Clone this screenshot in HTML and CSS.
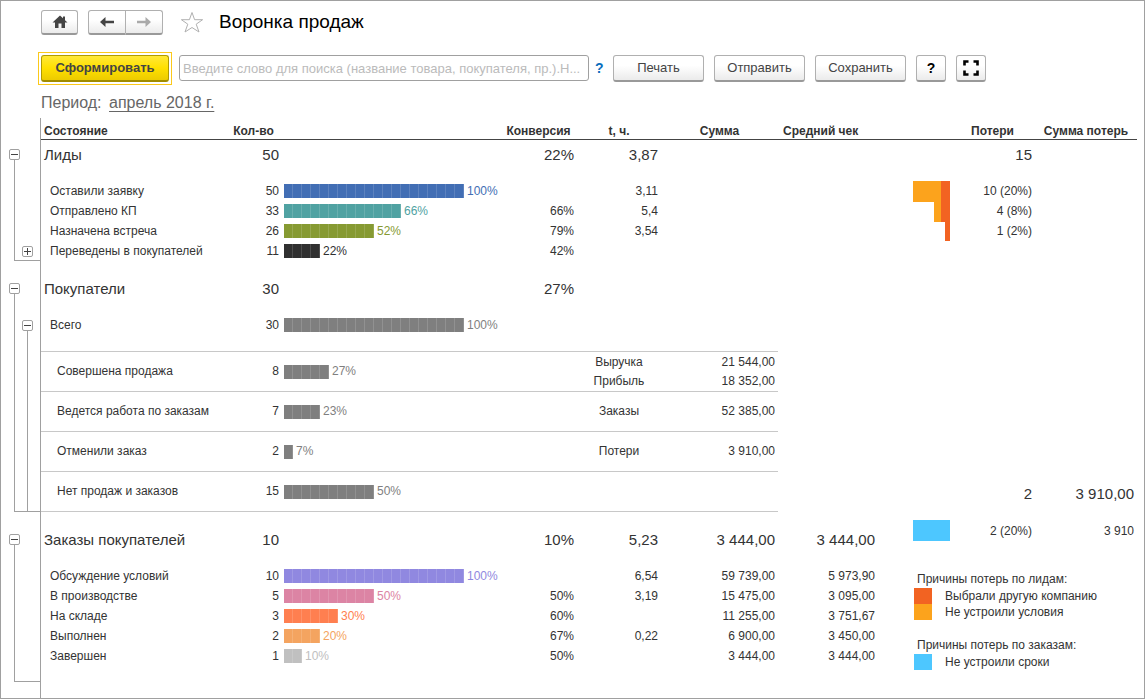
FILE: index.html
```html
<!DOCTYPE html>
<html lang="ru">
<head>
    <meta charset="UTF-8">
    <meta name="viewport" content="width=device-width, initial-scale=1.0">
    <title>Воронка продаж</title>
    <link rel="stylesheet" href="styles.css">
</head>
<body>
    <div class="window">
        <header class="title-bar">
            <button class="btn home" type="button" aria-label="Домой">
                <svg width="16" height="14" viewBox="0 0 16 14"><path d="M8 0.5 L11 3.3 V1.5 H13 V5.2 L15.5 7.5 H13 V13 H9.5 V8.5 H6.5 V13 H3 V7.5 H0.5 Z" fill="#444"/></svg>
            </button>
            <div class="nav">
                <button class="btn" type="button" aria-label="Назад">
                    <svg width="14" height="10" viewBox="0 0 14 10"><path d="M0 5 L5.5 0 V3.8 H14 V6.2 H5.5 V10 Z" fill="#444"/></svg>
                </button>
                <button class="btn" type="button" aria-label="Вперед">
                    <svg width="14" height="10" viewBox="0 0 14 10"><path d="M14 5 L8.5 0 V3.8 H0 V6.2 H8.5 V10 Z" fill="#aaa"/></svg>
                </button>
            </div>
            <svg class="star" width="24" height="22" viewBox="0 0 24 22"><path d="M12 1.5 L14.6 8.7 H22.6 L16.2 13.2 L19 21 L12 16.5 L5 21 L7.8 13.2 L1.4 8.7 H9.4 Z" fill="none" stroke="#b0b0b0" stroke-width="1"/></svg>
            <h1>Воронка продаж</h1>
        </header>

        <div class="toolbar">
            <div class="focus">
                <button class="btn primary" type="button">Сформировать</button>
            </div>
            <input class="search" type="text" aria-label="Поиск" placeholder="Введите слово для поиска (название товара, покупателя, пр.).Н...">
            <a class="hint" href="#">?</a>
            <button class="btn wide" type="button">Печать</button>
            <button class="btn wide" type="button">Отправить</button>
            <button class="btn wide" type="button">Сохранить</button>
            <button class="btn small" type="button">?</button>
            <button class="btn small" type="button" aria-label="Развернуть">
                <svg width="16" height="16" viewBox="0 0 16 16"><path d="M1.5 5.5 V1.5 H5.5 M10.5 1.5 H14.5 V5.5 M14.5 10.5 V14.5 H10.5 M5.5 14.5 H1.5 V10.5" fill="none" stroke="#000" stroke-width="2.6"/></svg>
            </button>
        </div>

        <div class="period">Период: <a href="#">апрель 2018 г.</a></div>

        <main class="report">
            <table class="funnel">
                <colgroup>
                    <col class="c-tree"><col class="c-tree"><col class="c-name"><col class="c-count"><col>
                    <col class="c-conv"><col class="c-time"><col class="c-sum"><col class="c-avg">
                </colgroup>
                <thead>
                    <tr>
                        <td></td><td class="edge"></td>
                        <th class="left">Состояние</th><th>Кол-во</th><th></th><th>Конверсия</th><th>t, ч.</th><th>Сумма</th><th class="left">Средний чек</th>
                    </tr>
                </thead>
                <tbody>
                    <tr class="group">
                        <td class="tree tree-1" rowspan="5"><button class="toggle" type="button" aria-label="Свернуть Лиды"><svg width="11" height="11"><path d="M2 5.5 H9" stroke="#444"/></svg></button></td>
                        <td class="edge" rowspan="4"></td>
                        <td class="name">Лиды</td><td>50</td><td></td><td>22%</td><td>3,87</td><td></td><td></td>
                    </tr>
                    <tr>
                        <td class="name">Оставили заявку</td><td>50</td>
                        <td class="chart"><div class="bar-row blue"><span class="bar" style="width: 180px"></span><span>100%</span></div></td>
                        <td></td><td>3,11</td><td></td><td></td>
                    </tr>
                    <tr>
                        <td class="name">Отправлено КП</td><td>33</td>
                        <td class="chart"><div class="bar-row teal"><span class="bar" style="width: 117px"></span><span>66%</span></div></td>
                        <td>66%</td><td>5,4</td><td></td><td></td>
                    </tr>
                    <tr>
                        <td class="name">Назначена встреча</td><td>26</td>
                        <td class="chart"><div class="bar-row olive"><span class="bar" style="width: 90px"></span><span>52%</span></div></td>
                        <td>79%</td><td>3,54</td><td></td><td></td>
                    </tr>
                    <tr>
                        <td class="tree tree-leaf edge"><button class="toggle" type="button" aria-label="Развернуть Переведены в покупателей"><svg width="11" height="11"><path d="M2 5.5 H9 M5.5 2 V9" stroke="#444"/></svg></button></td>
                        <td class="name">Переведены в покупателей</td><td>11</td>
                        <td class="chart"><div class="bar-row dark"><span class="bar" style="width: 36px"></span><span>22%</span></div></td>
                        <td>42%</td><td></td><td></td><td></td>
                    </tr>
                    <tr class="gap"><td></td><td class="edge"></td><td colspan="7"></td></tr>
                </tbody>
                <tbody>
                    <tr class="group">
                        <td class="tree tree-1" rowspan="7"><button class="toggle" type="button" aria-label="Свернуть Покупатели"><svg width="11" height="11"><path d="M2 5.5 H9" stroke="#444"/></svg></button></td>
                        <td class="edge"></td>
                        <td class="name">Покупатели</td><td>30</td><td></td><td>27%</td><td></td><td></td><td></td>
                    </tr>
                    <tr>
                        <td class="tree tree-2 edge" rowspan="6"><button class="toggle" type="button" aria-label="Свернуть Всего"><svg width="11" height="11"><path d="M2 5.5 H9" stroke="#444"/></svg></button></td>
                        <td class="name">Всего</td><td>30</td>
                        <td class="chart"><div class="bar-row gray"><span class="bar" style="width: 180px"></span><span>100%</span></div></td>
                        <td></td><td></td><td></td><td></td>
                    </tr>
                    <tr class="space"><td colspan="7"></td></tr>
                    <tr class="sub">
                        <td class="name">Совершена продажа</td><td>8</td>
                        <td class="chart"><div class="bar-row gray"><span class="bar" style="width: 45px"></span><span>27%</span></div></td>
                        <td></td><td class="kind">Выручка<br>Прибыль</td><td>21 544,00<br>18 352,00</td><td class="plain"></td>
                    </tr>
                    <tr class="sub">
                        <td class="name">Ведется работа по заказам</td><td>7</td>
                        <td class="chart"><div class="bar-row gray"><span class="bar" style="width: 36px"></span><span>23%</span></div></td>
                        <td></td><td class="kind">Заказы</td><td>52 385,00</td><td class="plain"></td>
                    </tr>
                    <tr class="sub">
                        <td class="name">Отменили заказ</td><td>2</td>
                        <td class="chart"><div class="bar-row gray"><span class="bar" style="width: 9px"></span><span>7%</span></div></td>
                        <td></td><td class="kind">Потери</td><td>3 910,00</td><td class="plain"></td>
                    </tr>
                    <tr class="sub last">
                        <td class="name">Нет продаж и заказов</td><td>15</td>
                        <td class="chart"><div class="bar-row gray"><span class="bar" style="width: 90px"></span><span>50%</span></div></td>
                        <td></td><td></td><td></td><td class="plain"></td>
                    </tr>
                    <tr class="gap"><td></td><td class="edge"></td><td colspan="7"></td></tr>
                </tbody>
                <tbody>
                    <tr class="group">
                        <td class="tree tree-1" rowspan="7"><button class="toggle" type="button" aria-label="Свернуть Заказы покупателей"><svg width="11" height="11"><path d="M2 5.5 H9" stroke="#444"/></svg></button></td>
                        <td class="tree tree-end edge" rowspan="7"></td>
                        <td class="name">Заказы покупателей</td><td>10</td><td></td><td>10%</td><td>5,23</td><td>3 444,00</td><td>3 444,00</td>
                    </tr>
                    <tr>
                        <td class="name">Обсуждение условий</td><td>10</td>
                        <td class="chart"><div class="bar-row violet"><span class="bar" style="width: 180px"></span><span>100%</span></div></td>
                        <td></td><td>6,54</td><td>59 739,00</td><td>5 973,90</td>
                    </tr>
                    <tr>
                        <td class="name">В производстве</td><td>5</td>
                        <td class="chart"><div class="bar-row pink"><span class="bar" style="width: 90px"></span><span>50%</span></div></td>
                        <td>50%</td><td>3,19</td><td>15 475,00</td><td>3 095,00</td>
                    </tr>
                    <tr>
                        <td class="name">На складе</td><td>3</td>
                        <td class="chart"><div class="bar-row coral"><span class="bar" style="width: 54px"></span><span>30%</span></div></td>
                        <td>60%</td><td></td><td>11 255,00</td><td>3 751,67</td>
                    </tr>
                    <tr>
                        <td class="name">Выполнен</td><td>2</td>
                        <td class="chart"><div class="bar-row sand"><span class="bar" style="width: 36px"></span><span>20%</span></div></td>
                        <td>67%</td><td>0,22</td><td>6 900,00</td><td>3 450,00</td>
                    </tr>
                    <tr>
                        <td class="name">Завершен</td><td>1</td>
                        <td class="chart"><div class="bar-row silver"><span class="bar" style="width: 18px"></span><span>10%</span></div></td>
                        <td>50%</td><td></td><td>3 444,00</td><td>3 444,00</td>
                    </tr>
                    <tr class="space"><td colspan="7"></td></tr>
                    <tr class="space"><td></td><td class="edge"></td><td colspan="7"></td></tr>
                </tbody>
            </table>

            <aside class="losses">
                <table>
                    <colgroup><col class="c-steps"><col><col class="c-loss-sum"></colgroup>
                    <thead>
                        <tr><th></th><th>Потери</th><th>Сумма потерь</th></tr>
                    </thead>
                    <tbody>
                        <tr class="group"><td></td><td>15</td><td></td></tr>
                        <tr>
                            <td class="steps" rowspan="3">
                                <svg width="37" height="60" viewBox="0 0 37 60">
                                    <path d="M0 0 H28 V41 H21 V21 H0 Z" fill="#fca31c"/>
                                    <path d="M28 0 H37 V60 H32 V41 H28 Z" fill="#f26322"/>
                                </svg>
                            </td>
                            <td>10 (20%)</td><td></td>
                        </tr>
                        <tr><td>4 (8%)</td><td></td></tr>
                        <tr><td>1 (2%)</td><td></td></tr>
                        <tr class="between"><td colspan="3"></td></tr>
                        <tr class="group"><td></td><td>2</td><td>3 910,00</td></tr>
                        <tr>
                            <td class="steps"><svg width="37" height="21"><rect width="37" height="21" fill="#4dc7ff"/></svg></td>
                            <td>2 (20%)</td><td>3 910</td>
                        </tr>
                    </tbody>
                </table>
                <div class="legend">
                    <h2>Причины потерь по лидам:</h2>
                    <ul>
                        <li><span class="swatch red"></span>Выбрали другую компанию</li>
                        <li><span class="swatch orange"></span>Не устроили условия</li>
                    </ul>
                    <h2>Причины потерь по заказам:</h2>
                    <ul>
                        <li><span class="swatch cyan"></span>Не устроили сроки</li>
                    </ul>
                </div>
            </aside>
        </main>
    </div>
</body>
</html>
```
FILE: styles.css
```css
* {
    box-sizing: border-box;
    margin: 0;
    padding: 0;
}

body {
    font-family: "Liberation Sans", Arial, sans-serif;
    font-size: 12px;
    color: #333;
    background-color: #fff;
}

button,
input {
    font-family: inherit;
}

.window {
    min-height: 100vh;
    border: 1px solid #a0a0a0;
}

/* top bar */
.title-bar {
    display: flex;
    align-items: center;
    height: 42px;
    padding-left: 40px;
}

.title-bar h1 {
    font-size: 19px;
    font-weight: normal;
    color: #000;
    margin-left: 15px;
}

.btn {
    display: flex;
    align-items: center;
    justify-content: center;
    height: 27px;
    border: 1px solid #b0b0b0;
    border-bottom: 2px solid #999;
    border-radius: 3px;
    background: linear-gradient(#fff 40%, #ebebeb);
    color: #444;
    font-size: 13px;
    cursor: pointer;
}

.title-bar .btn {
    width: 37px;
    height: 25px;
}

.nav {
    display: flex;
    margin-left: 10px;
}

.nav .btn:first-child {
    width: 38px;
    border-radius: 3px 0 0 3px;
}

.nav .btn:last-child {
    border-left: none;
    border-radius: 0 3px 3px 0;
}

.star {
    margin-left: 17px;
}

/* commands */
.toolbar {
    display: flex;
    align-items: center;
    height: 50px;
    padding: 0 158px 0 37px;
}

.focus {
    padding: 2px;
    border: 1px solid #fbc91b;
}

.primary {
    width: 128px;
    border-color: #b09a00;
    border-bottom-color: #a08c00;
    background: linear-gradient(#ffe838, #ffe000 50%, #eccb00);
    font-weight: bold;
}

.search {
    flex: 1;
    min-width: 0;
    height: 26px;
    margin-left: 7px;
    padding: 0 3px;
    border: 1px solid #a0a0a0;
    border-radius: 3px;
    font-size: 13px;
    color: #333;
}

.search::placeholder {
    color: #bbb;
}

.hint {
    width: 24px;
    padding-left: 6px;
    font-size: 14px;
    font-weight: bold;
    color: #0a6ebd;
    text-decoration: none;
}

.wide {
    width: 91px;
    margin-right: 10px;
}

.small {
    width: 30px;
    font-size: 14px;
    font-weight: bold;
    color: #000;
}

.small + .small {
    margin-left: 10px;
}

.period {
    height: 25px;
    padding-left: 40px;
    line-height: 20px;
    font-size: 16px;
    color: #666;
}

.period a {
    color: #666;
    margin-left: 3px;
    text-underline-offset: 3px;
}

/* report */
.report {
    display: flex;
    align-items: flex-start;
}

table {
    width: 100%;
    table-layout: fixed;
    border-collapse: separate;
    border-spacing: 0;
}

.funnel {
    flex: 1;
}

.c-tree { width: 20px; }
.c-name { width: 184px; }
.c-count { width: 57px; }
.c-conv { width: 77px; }
.c-time { width: 84px; }
.c-sum { width: 117px; }
.c-avg { width: 100px; }

th {
    height: 22px;
    padding-top: 5px;
    border-bottom: 1px solid #444;
    line-height: 16px;
    font-size: 12px;
    white-space: nowrap;
}

th.left {
    text-align: left;
    padding-left: 3px;
}

th.left:last-child {
    padding-left: 5px;
}

td {
    height: 20px;
    padding-right: 3px;
    line-height: 20px;
    text-align: right;
    white-space: nowrap;
}

td.name {
    padding-left: 9px;
    text-align: left;
}

.group td {
    height: 41px;
    padding-top: 5px;
    vertical-align: top;
    font-size: 15px;
}

.group .name {
    padding-left: 3px;
}

.sub td {
    height: 40px;
    line-height: 19px;
    border-top: 1px solid #c8c8c8;
}

.sub .name {
    padding-left: 16px;
}

.sub .kind {
    padding: 0;
    text-align: center;
}

.sub.last td {
    height: 41px;
    border-bottom: 1px solid #c8c8c8;
}

.sub td.plain {
    border: none;
}

.gap td {
    height: 13px;
}

.space td {
    height: 16px;
}

td.edge {
    border-right: 1px solid #a0a0a0;
}

/* outline brackets in the left margin */
td.tree {
    padding: 5px 0 0 1px;
    vertical-align: top;
    text-align: left;
    background-image: linear-gradient(#a0a0a0, #a0a0a0), linear-gradient(#a0a0a0, #a0a0a0);
    background-repeat: no-repeat;
}

td.tree-1 {
    padding: 9px 0 0 8px;
    background-position: 13px 20px, 13px 100%;
    background-size: 1px 100%, 100% 1px;
}

td.tree-2 {
    background-position: 6px 16px, 0 100%;
    background-size: 1px 100%, 100% 1px;
}

td.tree-leaf,
td.tree-end {
    background-position: 0 100%;
    background-size: 100% 1px;
}

.toggle {
    display: block;
    width: 11px;
    height: 11px;
    border: none;
    border-radius: 2px;
    outline: 1px solid #a0a0a0;
    outline-offset: -1px;
    background-color: #fff;
    cursor: pointer;
}

.toggle svg {
    display: block;
}

/* bars */
td.chart {
    padding-left: 2px;
}

.bar-row {
    display: flex;
    align-items: center;
    gap: 3px;
}

.bar {
    flex-shrink: 0;
    height: 14px;
    background-color: currentColor;
    background-image: repeating-linear-gradient(90deg, transparent 0 8px, rgba(255, 255, 255, 0.14) 8px 9px);
}

.blue { color: #426eb4; }
.teal { color: #50a2a2; }
.olive { color: #869a32; }
.dark { color: #303030; }
.gray { color: #7f7f7f; }
.violet { color: #9088e0; }
.pink { color: #dc84a4; }
.coral { color: #ff7f50; }
.sand { color: #f4a460; }
.silver { color: #c0c0c0; }

/* losses */
.losses {
    width: 266px;
    padding-right: 7px;
}

.c-steps { width: 72px; }
.c-loss-sum { width: 102px; }

td.steps {
    padding: 0 0 0 35px;
    text-align: left;
    vertical-align: top;
}

.steps svg {
    display: block;
}

.between td {
    height: 238px;
}

.legend {
    padding: 30px 0 0 36px;
}

.legend h2 {
    padding-left: 3px;
    line-height: 17px;
    font-size: 12px;
    font-weight: normal;
}

.legend ul {
    list-style-type: none;
    margin-bottom: 17px;
}

.legend li {
    display: flex;
    align-items: center;
    gap: 13px;
    height: 16px;
}

.swatch {
    width: 18px;
    height: 16px;
}

.red { background-color: #f26322; }
.orange { background-color: #fca31c; }
.cyan { background-color: #4dc7ff; }
```
